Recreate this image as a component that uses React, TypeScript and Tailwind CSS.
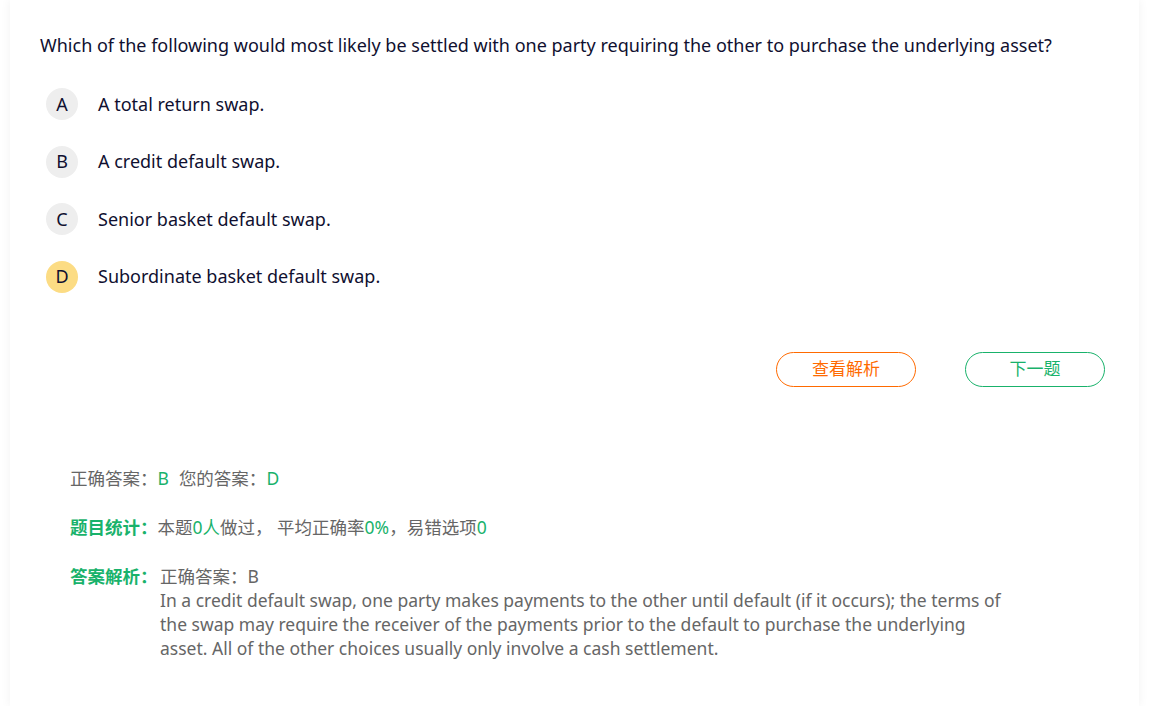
import React from 'react';

const options = [
  { key: 'A', text: 'A total return swap.' },
  { key: 'B', text: 'A credit default swap.' },
  { key: 'C', text: 'Senior basket default swap.' },
  { key: 'D', text: 'Subordinate basket default swap.' },
];

const selected = 'D';

export default function App() {
  return (
    <div
      className="min-h-screen bg-white"
      style={{ fontFamily: '"Noto Sans", "Noto Sans CJK SC", sans-serif' }}
    >
      <div className="mx-[10px] min-h-[706px] bg-white shadow-[0_0_10px_rgba(0,0,0,0.06)]">
        <div className="pl-[30px] pr-[30px] pt-[32px]">
          {/* Question */}
          <p className="text-[18px] leading-[26px] text-[#101030]">
            Which of the following would most likely be settled with one party requiring the other to purchase the underlying asset?
          </p>

          {/* Options */}
          <div className="mt-[30px] flex flex-col gap-[25.5px]">
            {options.map((o) => (
              <div key={o.key} className="flex items-center">
                <div
                  className={
                    'ml-[6px] flex h-[32px] w-[32px] items-center justify-center rounded-full text-[18px] text-[#101030] ' +
                    (o.key === selected ? 'bg-[#fcdc84]' : 'bg-[#eeeeee]')
                  }
                >
                  {o.key}
                </div>
                <span className="ml-[20px] text-[18px] text-[#101030]">{o.text}</span>
              </div>
            ))}
          </div>

          {/* Buttons */}
          <div className="mt-[59px] flex justify-end gap-[49px] pr-[4px]">
            <button className="flex h-[35px] w-[140px] items-center justify-center rounded-full border border-[#ff6a00] text-[17px] text-[#ff6a00]">
              查看解析
            </button>
            <button className="flex h-[35px] w-[140px] items-center justify-center rounded-full border border-[#19b26b] text-[17px] text-[#19b26b]">
              下一题
            </button>
          </div>

          {/* Result */}
          <div className="mt-[79px] pl-[30px] text-[17.5px] leading-[24px] text-[#666666]">
            <div>
              正确答案：<span className="text-[#19b26b]">B</span>
              <span className="ml-[10px]">您的答案：</span>
              <span className="text-[#19b26b]">D</span>
            </div>

            <div className="mt-[25px]">
              <span className="font-bold text-[#19b26b]">题目统计：</span>
              本题<span className="text-[#19b26b]">0人</span>做过， 平均正确率
              <span className="text-[#19b26b]">0%</span>，易错选项
              <span className="text-[#19b26b]">0</span>
            </div>

            <div className="mt-[25px] flex">
              <span className="w-[90px] shrink-0 font-bold text-[#19b26b]">答案解析：</span>
              <div className="w-[850px]">
                <div>正确答案：B</div>
                <div>
                  In a credit default swap, one party makes payments to the other until default (if it occurs); the terms of the swap may require the receiver of the payments prior to the default to purchase the underlying asset. All of the other choices usually only involve a cash settlement.
                </div>
              </div>
            </div>
          </div>
        </div>
      </div>
    </div>
  );
}
